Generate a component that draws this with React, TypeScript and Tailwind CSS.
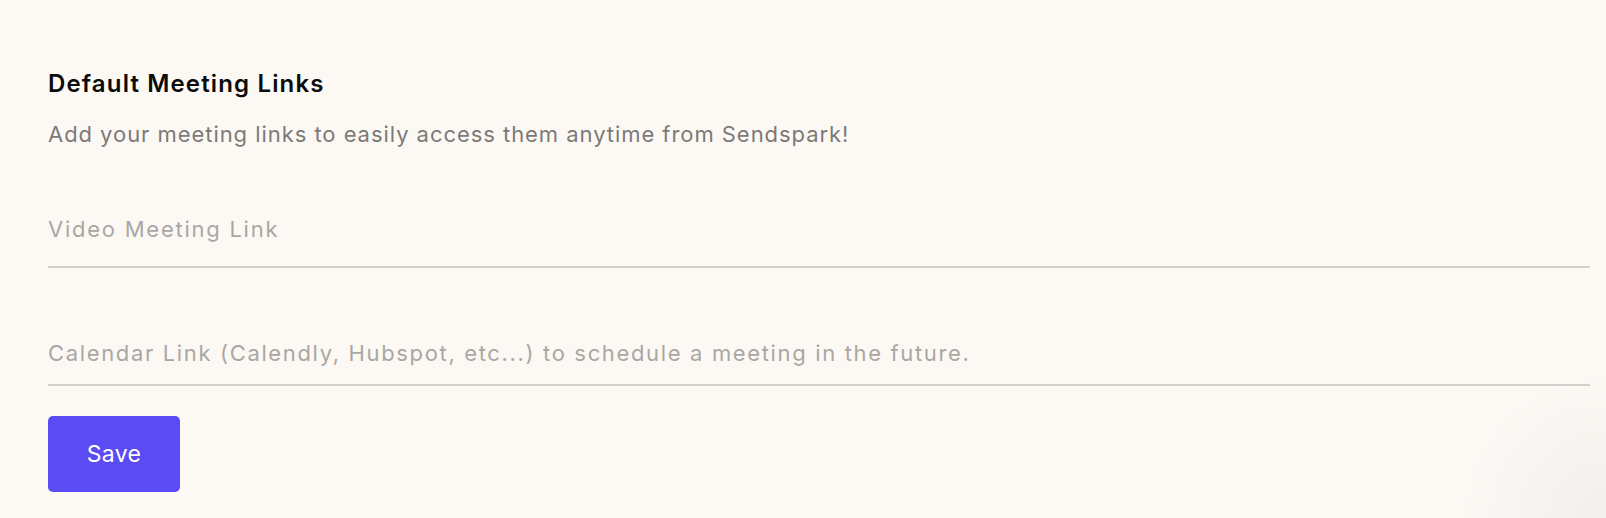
import React from "react";

export default function App() {
  return (
    <div
      className="relative h-[518px] w-full overflow-hidden bg-[#fcf9f5] pl-12 pr-4 pt-[68px]"
      style={{ fontFamily: "Inter, 'Noto Sans', sans-serif" }}
    >
      <h2 className="text-[24px] font-semibold leading-[32px] tracking-[1.15px] text-[#0b0b0b]">
        Default Meeting Links
      </h2>
      <p className="mt-[20px] text-[22px] leading-[28px] tracking-[0.95px] text-[#7d7a77]">
        Add your meeting links to easily access them anytime from Sendspark!
      </p>

      <div className="mt-[67px] border-b-2 border-[#d4d0cb] pb-[23px]">
        <input
          type="text"
          placeholder="Video Meeting Link"
          className="block h-[28px] w-full bg-transparent text-[22px] leading-[28px] tracking-[1.75px] text-[#1f1f1f] outline-none placeholder:text-[#aaa7a3]"
        />
      </div>

      <div className="mt-[71px] border-b-2 border-[#d4d0cb] pb-[17px]">
        <input
          type="text"
          placeholder="Calendar Link (Calendly, Hubspot, etc...) to schedule a meeting in the future."
          className="block h-[28px] w-full bg-transparent text-[22px] leading-[28px] tracking-[1.65px] text-[#1f1f1f] outline-none placeholder:text-[#aaa7a3]"
        />
      </div>

      <button
        type="button"
        className="mt-[30px] flex h-[76px] w-[132px] items-center justify-center rounded-[5px] bg-[#5b4bf5] text-[23px] tracking-[0.3px] text-white"
      >
        Save
      </button>

      {/* soft corner shade */}
      <div className="pointer-events-none absolute bottom-0 right-0 h-[170px] w-[170px] bg-[radial-gradient(circle_at_100%_100%,rgba(0,0,0,0.04),transparent_60%)]" />
    </div>
  );
}
